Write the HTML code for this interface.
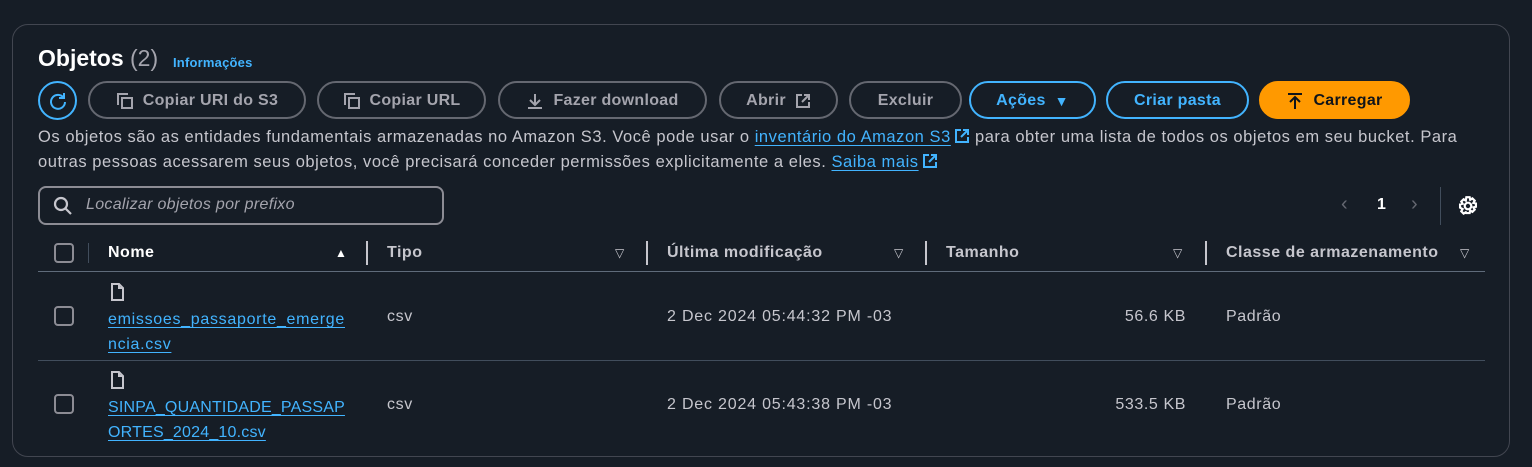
<!DOCTYPE html>
<html><head><meta charset="utf-8"><style>
*{box-sizing:border-box;margin:0;padding:0}
body{width:1532px;height:467px;background:#161d26;font-family:"Liberation Sans",sans-serif;color:#c6c6cd;position:relative;overflow:hidden;font-size:16px;letter-spacing:0.6px}
.a{position:absolute;white-space:nowrap}
.panel{position:absolute;left:12px;top:24px;width:1498px;height:433px;border:1px solid #424650;border-radius:16px;background:#161d26}
.btn{position:absolute;top:81px;height:38px;border:2px solid #656871;border-radius:20px;color:#a4a4ad;font-weight:bold;font-size:16px;display:flex;align-items:center;justify-content:center;gap:9px;letter-spacing:0.3px;padding-top:1px}
.blue{border-color:#42b4ff;color:#42b4ff}
a{color:#42b4ff;text-decoration:underline;text-underline-offset:3px}
.hd{position:absolute;top:244px;font-weight:bold;color:#c6c6cd;font-size:16px;letter-spacing:0.5px}
.dv{position:absolute;top:241px;width:2px;height:24px;background:#c6c6cd}
.ar{position:absolute;top:246px;font-size:12px;color:#c6c6cd}
.cb{position:absolute;width:20px;height:20px;border:2px solid #8c8c94;border-radius:4px}
.hl{position:absolute;left:38px;width:1447px;height:1px;background:#414d5c}
.ext{display:inline-block;vertical-align:-2px;margin-left:3px}
</style></head><body>
<div class="panel"></div>
<div class="a" style="left:38px;top:45px;font-size:23px;font-weight:bold;color:#fff;letter-spacing:0">Objetos <span style="font-weight:normal;color:#a4a4ad">(2)</span></div>
<div class="a" style="left:173px;top:55px;font-size:13px;font-weight:bold;color:#42b4ff;letter-spacing:0.2px">Informações</div>

<div class="a" style="left:38px;top:81px;width:39px;height:39px;border:2px solid #42b4ff;border-radius:50%;display:flex;align-items:center;justify-content:center">
<svg width="20" height="20" viewBox="0 0 20 20" fill="none" stroke="#42b4ff" stroke-width="2"><path d="M15.5 6.5A7 7 0 1 0 17 11"/><path d="M16 2v5h-5"/></svg></div>
<div class="btn" style="left:88px;width:218px"><svg width="18" height="18" viewBox="0 0 18 18" fill="none" stroke="#a4a4ad" stroke-width="2"><path d="M2 13V2h10"/><rect x="6" y="6" width="10" height="10"/></svg>Copiar URI do S3</div>
<div class="btn" style="left:317px;width:169px"><svg width="18" height="18" viewBox="0 0 18 18" fill="none" stroke="#a4a4ad" stroke-width="2"><path d="M2 13V2h10"/><rect x="6" y="6" width="10" height="10"/></svg>Copiar URL</div>
<div class="btn" style="left:498px;width:209px"><svg width="18" height="18" viewBox="0 0 18 18" fill="none" stroke="#a4a4ad" stroke-width="2"><path d="M9 2v10M4 8l5 5 5-5M2 16h14"/></svg>Fazer download</div>
<div class="btn" style="left:719px;width:119px">Abrir <svg width="16" height="16" viewBox="0 0 16 16" fill="none" stroke="#a4a4ad" stroke-width="2"><path d="M7 2H2v12h12V9M9 2h5v5M14 2L7 9"/></svg></div>
<div class="btn" style="left:849px;width:113px">Excluir</div>
<div class="btn blue" style="left:969px;width:127px">Ações <span style="font-size:14px">▼</span></div>
<div class="btn blue" style="left:1106px;width:143px">Criar pasta</div>
<div class="btn" style="left:1259px;width:151px;background:#ff9900;border-color:#ff9900;color:#0f141a"><svg width="18" height="18" viewBox="0 0 18 18" fill="none" stroke="#0f141a" stroke-width="2"><path d="M2 2h14M9 17V6M4 10l5-5 5 5"/></svg>Carregar</div>

<div class="a" style="left:38px;top:125px;line-height:25px;font-size:16.5px;letter-spacing:0.55px">Os objetos são as entidades fundamentais armazenadas no Amazon S3. Você pode usar o <a>inventário do Amazon S3</a><svg class="ext" width="16" height="16" viewBox="0 0 16 16" fill="none" stroke="#42b4ff" stroke-width="2"><path d="M7 2H2v12h12V9M9 2h5v5M14 2L7 9"/></svg> para obter uma lista de todos os objetos em seu bucket. Para<br>outras pessoas acessarem seus objetos, você precisará conceder permissões explicitamente a eles. <a>Saiba mais</a><svg class="ext" width="16" height="16" viewBox="0 0 16 16" fill="none" stroke="#42b4ff" stroke-width="2"><path d="M7 2H2v12h12V9M9 2h5v5M14 2L7 9"/></svg></div>

<div class="a" style="left:38px;top:186px;width:406px;height:39px;border:2px solid #8c8c94;border-radius:8px"></div>
<svg class="a" style="left:53px;top:196px" width="20" height="20" viewBox="0 0 20 20" fill="none" stroke="#c6c6cd" stroke-width="2.2"><circle cx="8" cy="8" r="6"/><path d="M12.5 12.5L18 18"/></svg>
<div class="a" style="left:86px;top:196px;font-style:italic;color:#a4a4ad;letter-spacing:0.3px">Localizar objetos por prefixo</div>

<div class="a" style="left:1341px;top:193px;font-size:20px;color:#656871">‹</div>
<div class="a" style="left:1377px;top:196px;font-weight:bold;color:#fff">1</div>
<div class="a" style="left:1411px;top:193px;font-size:20px;color:#656871">›</div>
<div class="a" style="left:1440px;top:187px;width:1px;height:38px;background:#414d5c"></div>
<svg class="a" style="left:1457px;top:195px" width="22" height="22" viewBox="0 0 20 20" fill="none" stroke="#fff" stroke-width="2"><circle cx="10" cy="10" r="3"/><path d="M8.5 2h3l.5 2.3 2-1.2 2.1 2.1-1.2 2 2.3.5v3l-2.3.5 1.2 2-2.1 2.1-2-1.2-.5 2.3h-3L8 15.7l-2 1.2-2.1-2.1 1.2-2L2.8 11.5v-3L5.1 8 3.9 6l2.1-2.1 2 1.2z"/></svg>

<div class="cb" style="left:54px;top:243px"></div>
<div class="a" style="left:88px;top:243px;width:1px;height:20px;background:#414d5c"></div>
<div class="hd" style="left:108px;color:#fff">Nome</div><div class="ar" style="left:335px;color:#fff">▲</div><div class="dv" style="left:366px"></div>
<div class="hd" style="left:387px">Tipo</div><div class="ar" style="left:615px">▽</div><div class="dv" style="left:646px"></div>
<div class="hd" style="left:667px">Última modificação</div><div class="ar" style="left:894px">▽</div><div class="dv" style="left:925px"></div>
<div class="hd" style="left:946px">Tamanho</div><div class="ar" style="left:1173px">▽</div><div class="dv" style="left:1205px"></div>
<div class="hd" style="left:1226px">Classe de armazenamento</div><div class="ar" style="left:1460px">▽</div>
<div class="hl" style="top:271px;background:#5f6b7a"></div>

<svg class="a" style="left:110px;top:283px" width="16" height="18" viewBox="0 0 16 18" fill="none" stroke="#c6c6cd" stroke-width="2"><path d="M2 1h7l4 4v12H2z M9 1v4h4"/></svg>
<div class="cb" style="left:54px;top:306px"></div>
<div class="a" style="left:108px;top:307px;line-height:25px;letter-spacing:0.7px"><a>emissoes_passaporte_emerge</a><br><a>ncia.csv</a></div>
<div class="a" style="left:387px;top:308px">csv</div>
<div class="a" style="left:667px;top:308px;letter-spacing:0.8px">2 Dec 2024 05:44:32 PM -03</div>
<div class="a" style="left:1036px;width:150px;text-align:right;top:308px">56.6 KB</div>
<div class="a" style="left:1226px;top:308px">Padrão</div>
<div class="hl" style="top:360px"></div>

<svg class="a" style="left:110px;top:371px" width="16" height="18" viewBox="0 0 16 18" fill="none" stroke="#c6c6cd" stroke-width="2"><path d="M2 1h7l4 4v12H2z M9 1v4h4"/></svg>
<div class="cb" style="left:54px;top:394px"></div>
<div class="a" style="left:108px;top:395px;line-height:25px;letter-spacing:0.2px"><a>SINPA_QUANTIDADE_PASSAP</a><br><a>ORTES_2024_10.csv</a></div>
<div class="a" style="left:387px;top:396px">csv</div>
<div class="a" style="left:667px;top:396px;letter-spacing:0.8px">2 Dec 2024 05:43:38 PM -03</div>
<div class="a" style="left:1036px;width:150px;text-align:right;top:396px">533.5 KB</div>
<div class="a" style="left:1226px;top:396px">Padrão</div>
</body></html>
